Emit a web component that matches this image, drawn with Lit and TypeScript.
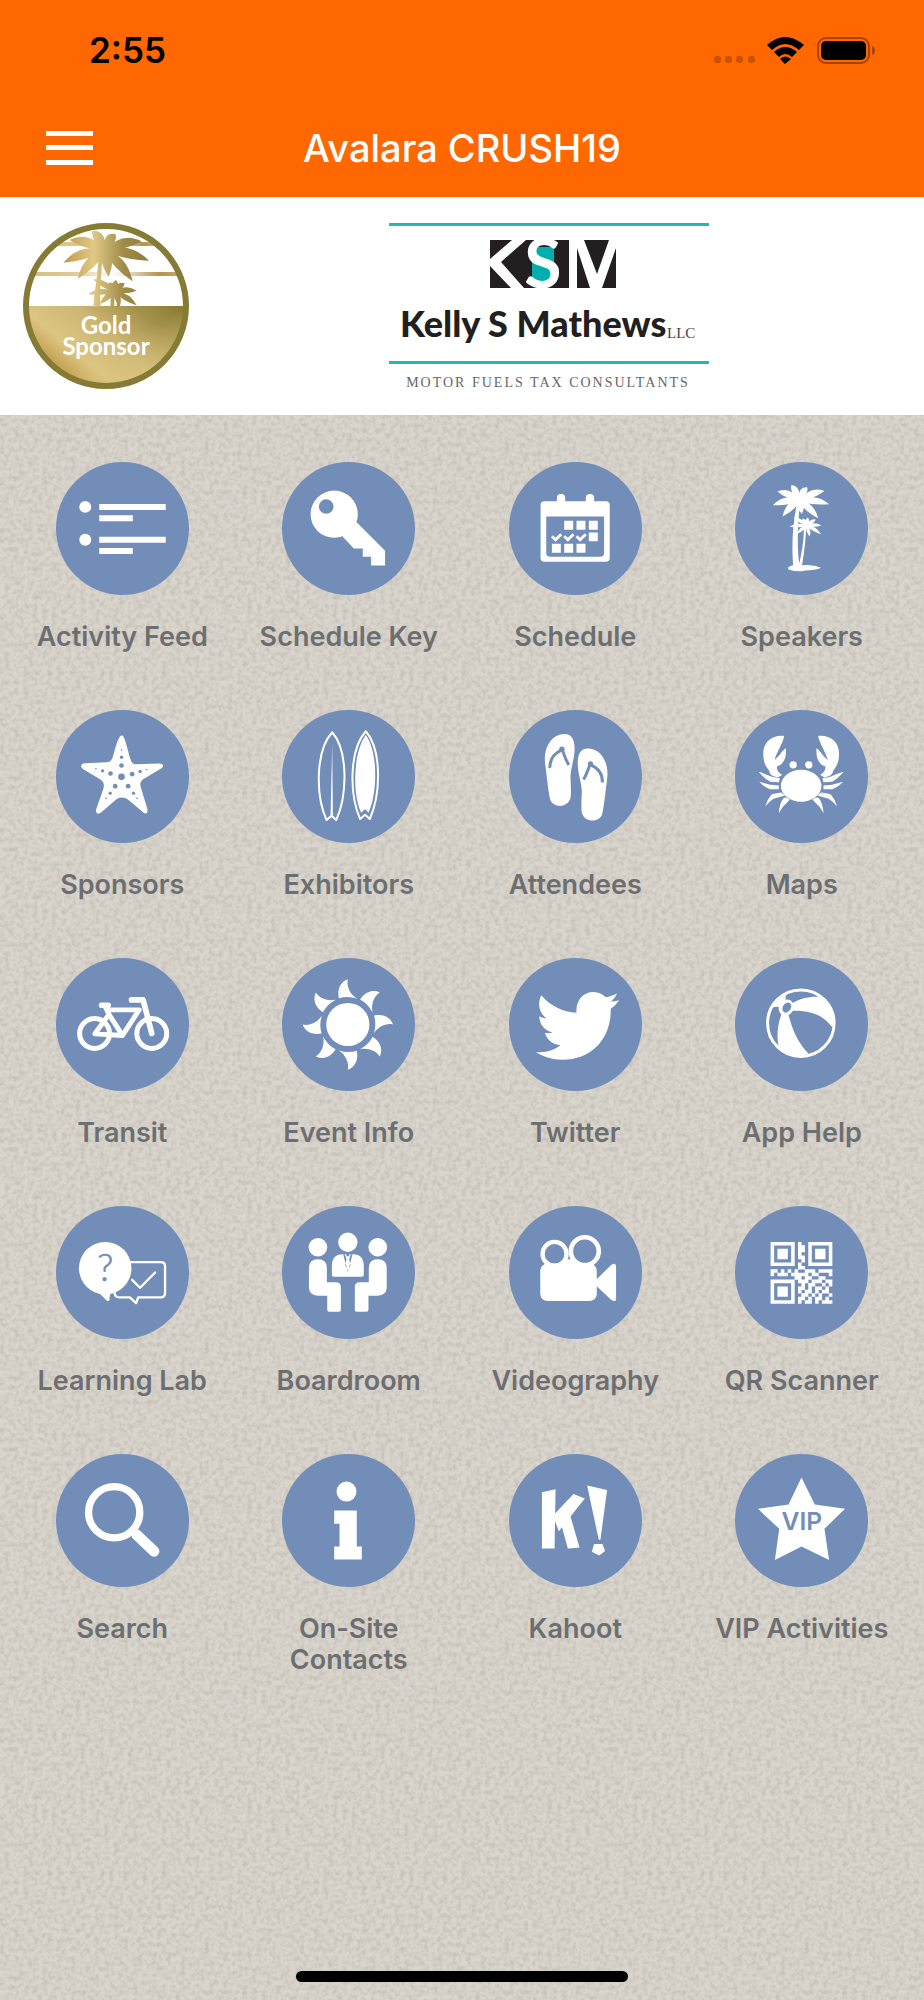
import { LitElement, html, css, svg, SVGTemplateResult } from "lit";
import { customElement, property } from "lit/decorators.js";

type Point = [number, number];

/* One palm frond: a thin leaf from the crown to its tip, arched upwards. */
const frond = ([cx, cy]: Point, [tx, ty]: Point, arch: number, width: number): string => {
  const mx = (cx + tx) / 2;
  const my = (cy + ty) / 2 - arch;
  const len = Math.hypot(tx - cx, ty - cy) || 1;
  const nx = (-(ty - cy) / len) * width;
  const ny = ((tx - cx) / len) * width;
  return `M${cx} ${cy}Q${mx + nx} ${my + ny} ${tx} ${ty}Q${mx - nx} ${my - ny} ${cx} ${cy}Z`;
};

const crown = (center: Point, tips: Point[], arch: number, width: number): string =>
  tips.map((tip) => frond(center, tip, arch, width)).join("");

const QR_ROWS = [
  "1111111.1..1111111",
  "1.....1.11.1.....1",
  "1.111.1.11.1.111.1",
  "1.111.1.1..1.111.1",
  "1.111.1.11.1.111.1",
  "1.....1..1.1.....1",
  "1111111.1..1111111",
  "........11........",
  "11.1.1.1..111.1111",
  "1.111.11111.11...1",
  ".......11.11..11..",
  "1111111.111.111.11",
  "1.....1..1.11..1.1",
  "1.111.1.11.1.11.1.",
  "1.111.1.1.11.1.11.",
  "1.111.1..11.1.1..1",
  "1.....1.11.1.11.1.",
  "1111111.1.11.1.111",
];

const qrPath = QR_ROWS.map((row, y) =>
  [...row].map((cell, x) => (cell === "1" ? `M${x} ${y}h1.04v1.04h-1.04z` : "")).join(""),
).join("");

const CLAW = svg`
  <path d="M967 141C930 138 903 158 904 198C905 224 914 236 922 246C922 257 934 264 948 266L961 258C950 251 945 246 945 233C966 226 974 208 972 178C960 185 955 200 938 213C945 188 962 165 967 141Z"/>
  <path d="M890 249Q908 254 930 264Q940 267 954 268L951 280L925 279Q908 270 890 249Z"/>
  <path d="M892 279L925 288L951 290L951 301L924 301Q906 295 892 279Z"/>
  <path d="M969 320L958 311Q936 313 928 318Q914 335 910 353Q920 340 935 330Z"/>
  <path d="M966 327Q952 343 951 374Q960 355 970 347L984 332L974 326Z"/>`;

const FLIPFLOP = svg`
  <path d="M305 132C330 132 337 155 335 185C333 215 322 240 323 265C324 290 326 315 322 328C312 355 272 355 262 330C255 300 252 260 247 225C240 175 265 132 305 132Z"/>
  <path class="cut-line" stroke-width="9" d="M261 234C260 206 275 190 297 180M297 176C303 192 309 212 318 225"/>
  <circle class="cut" cx="297" cy="178" r="8"/>`;

const SITTER = svg`
  <circle cx="108" cy="124" r="28"/>
  <path d="M81 186Q81 160 108 160Q135 160 135 186V229H162Q177 229 177 244V312Q177 318 171 318H142Q136 318 136 312V270H108Q81 268 81 244Z"/>`;

const ICONS: Record<string, SVGTemplateResult> = {
  feed: svg`<g transform="translate(-168 -69)">
    <circle cx="256" cy="204" r="18"/><circle cx="256" cy="303" r="18"/>
    <path d="M298 195h200v18H298zM298 229h101v18H298zM298 294h200v18H298zM298 328h101v18H298z"/></g>`,
  key: svg`<g transform="translate(-846 -69)">
    <circle cx="1003" cy="226" r="71"/>
    <path d="M1069 249L1156 336V380H1114V354H1089V329H1062L1028 293Z"/>
    <circle class="cut" cx="979" cy="203" r="22"/></g>`,
  calendar: svg`<g transform="translate(-140 -69)">
    <rect x="284" y="165" width="25" height="40" rx="12"/><rect x="371" y="165" width="25" height="40" rx="12"/>
    <path fill-rule="evenodd" d="M247 187H431Q443 187 443 199V357Q443 369 431 369H247Q235 369 235 357V199Q235 187 247 187ZM252 233V342Q252 354 264 354H414Q426 354 426 342V233Z"/>
    <path d="M306 246h27v27h-27zM343 246h27v27h-27zM380 246h27v27h-27zM380 281h27v26h-27zM269 315h27v27h-27zM306 315h27v27h-27zM343 315h27v27h-27z"/>
    <path d="M266 295L272 289L280 297L294 283L300 289L280 309ZM303 295L309 289L317 297L331 283L337 289L317 309ZM340 295L346 289L354 297L368 283L374 289L354 309Z"/></g>`,
  palms: svg`<g transform="translate(-819 -66)">
    <path d="${crown([1012, 184], [[989, 135], [1036, 142], [1088, 153], [1102, 193], [1069, 235], [1020, 222], [962, 230], [933, 196], [947, 155]], 12, 21)}"/>
    <circle cx="1012" cy="182" r="17"/>
    <path d="${crown([1035, 258], [[1022, 236], [1038, 233], [1062, 239], [1079, 257], [1078, 283], [1044, 290], [1006, 282], [983, 260], [995, 232]], 4, 11)}"/>
    <circle cx="1034" cy="258" r="10"/>
    <path d="M1004 195C994 250 988 310 994 380H1013C1005 320 1007 260 1014 195ZM1026 262C1027 300 1020 340 1010 380H1020C1027 340 1032 300 1033 262Z"/>
    <path d="M978 384Q990 372 1012 378Q1050 372 1078 384Q1060 392 1030 392Q1010 398 985 391Q978 389 978 384Z"/></g>`,
  starfish: svg`<g transform="translate(-168 -60)">
    <path d="M366 137C373 137 378 160 385 184C392 210 395 222 406 223L478 221C492 221 494 230 484 236L430 268C420 276 420 284 424 296L442 355C446 371 439 376 429 367L385 330C374 321 358 321 348 330L305 367C293 377 286 370 289 358L310 298C314 285 312 278 303 270L250 238C238 230 244 220 257 220L320 217C335 216 336 210 342 190C350 160 358 137 366 137Z"/>
    <g class="cut"><circle cx="365" cy="261" r="10"/><circle cx="365" cy="227" r="7"/><circle cx="365" cy="202" r="5"/><circle cx="365" cy="181" r="2.500"/>
    <circle cx="332" cy="251" r="7"/><circle cx="308" cy="243" r="5"/><circle cx="288" cy="237" r="2.500"/>
    <circle cx="397" cy="253" r="7"/><circle cx="421" cy="245" r="5"/><circle cx="441" cy="239" r="2.500"/>
    <circle cx="346" cy="289" r="7"/><circle cx="331" cy="310" r="5"/><circle cx="319" cy="326" r="2.500"/>
    <circle cx="385" cy="289" r="7"/><circle cx="401" cy="310" r="5"/><circle cx="412" cy="326" r="2.500"/></g></g>`,
  surfboards: svg`<g transform="translate(-847 -62)">
    <path class="line" stroke-width="6" d="M998 129C1046 184 1044 318 1010 393L996 380L981 393C947 318 948 184 998 129Z"/>
    <path d="M998 165L1000 380H993Z"/>
    <path class="line" stroke-width="6" d="M1099 126C1147 181 1145 313 1111 390L1097 377L1082 390C1048 313 1050 181 1099 126Z"/>
    <path d="M1099 137C1136 187 1135 310 1107 371L1097 360L1085 371C1057 310 1062 187 1099 137Z"/></g>`,
  flipflops: svg`<g transform="translate(-138 -60)">${FLIPFLOP}<g transform="translate(680 44) scale(-1 1)">${FLIPFLOP}</g></g>`,
  crab: svg`<g transform="translate(-819 -63)">
    <ellipse cx="1018" cy="291" rx="61" ry="48"/><circle cx="994" cy="228" r="11"/><circle cx="1041" cy="228" r="11"/>
    ${CLAW}<g transform="translate(2036 0) scale(-1 1)">${CLAW}</g></g>`,
  bike: svg`<g transform="translate(-168 -51)" class="line">
    <circle cx="284" cy="278" r="45" stroke-width="15"/><circle cx="456" cy="278" r="45" stroke-width="15"/>
    <path stroke-width="17" d="M305 193H325M395 177H430L456 278"/>
    <path stroke-width="15" d="M316 197L328 222L368 284L418 207H326M368 284L285 279L322 228"/></g>`,
  sun: svg`<g transform="translate(-847 -53)"><circle cx="1045" cy="253" r="65"/>
    ${[0, 45, 90, 135, 180, 225, 270, 315].map(
      (angle) => svg`<path transform="rotate(${angle} 1045 253)" d="M1018 174C1012 144 1025 124 1045 117C1040 138 1052 162 1072 175Q1045 166 1018 174Z"/>`,
    )}</g>`,
  bird: svg`<g transform="translate(-138 -51)">
    <path d="M235 163C262 195 300 214 341 216C338 180 360 153 392 153C408 153 420 160 429 169C440 168 453 163 463 158C459 168 452 175 445 182C453 182 461 180 469 177C463 188 453 197 444 204C446 290 390 357 298 357C270 357 240 349 219 334C245 337 272 330 293 313C270 312 252 298 246 276C254 278 262 277 269 275C244 268 229 250 229 226C236 230 244 232 251 233C228 215 223 188 235 163Z"/></g>`,
  ball: svg`<g transform="translate(-816 -54)">
    <circle class="line" cx="1014" cy="250" r="100" stroke-width="9"/>
    <path d="M985 192C1010 176 1040 169 1070 171C1096 186 1117 215 1117 255L1106 260C1085 230 1050 211 985 213Z"/>
    <path d="M957 220H976C985 260 1003 308 1037 341C1015 351 970 350 947 320C941 290 944 250 957 220Z"/>
    <path d="M928 203Q945 178 970 162L967 182L948 201Q938 199 928 203Z"/>
    <ellipse cx="970" cy="203" rx="22" ry="25" transform="rotate(30 970 203)"/>
    <ellipse class="cut" cx="972" cy="203" rx="12" ry="16" transform="rotate(35 972 203)"/></g>`,
  learning: svg`
    <path class="line" stroke-width="7" d="M222 169H315Q328 169 328 182V262Q328 275 315 275H247L241 292L222 275H192Q178 275 176 262"/>
    <path class="line" stroke-width="7" d="M229 222L253 246L298 200"/>
    <circle cx="148" cy="187" r="79"/>
    <path d="M120 252L152 284Q162 290 161 277L166 250Z"/>
    <text class="question" x="148" y="227">?</text>`,
  boardroom: svg`${SITTER}<g transform="translate(396 0) scale(-1 1)">${SITTER}</g>
    <circle cx="198" cy="109" r="29"/>
    <path d="M150 180Q150 146 182 145H214Q246 146 246 180V207Q246 213 240 213H156Q150 213 150 207Z"/>
    <path class="cut" d="M184 145L198 199L212 145L207 145L202 160L206 178L198 194L190 178L194 160L189 145Z"/>
    <path class="cut" d="M192 143H204L201 151H195Z"/>`,
  video: svg`
    <rect x="94" y="173" width="170" height="113" rx="22"/>
    <path d="M262 222L308 177Q322 168 322 182V278Q322 291 308 283L262 240Z"/>
    <circle class="line" cx="137" cy="144" r="36" stroke-width="13"/>
    <circle class="line" cx="228" cy="136" r="42" stroke-width="14"/>
    <path d="M165 160L190 160L200 178H155Z"/>`,
  qr: svg`<path transform="translate(107 108) scale(10.300)" d="${qrPath}"/>`,
  search: svg`<circle class="line" cx="175" cy="175" r="77" stroke-width="22"/>
    <path class="line" stroke-width="32" d="M243 243L295 293"/>`,
  info: svg`<circle cx="194" cy="113" r="30"/><path d="M157 170H225V278H240V317H157V278H173V210H157Z"/>`,
  kahoot: svg`
    <path d="M99 115L140 106L137 284H99Z"/><path d="M194 120L228 134L150 232L132 186Z"/><path d="M182 178L212 281L177 284L155 204Z"/>
    <path d="M235 95L295 108L275 258H270Z"/><path d="M256 271H281L289 292L271 305L249 294Z"/>`,
  vip: svg`<path d="M200 71L240 152L331 165L269 225L283 319L200 278L120 319L133 225L69 165L161 152Z"/>
    <text class="vip" x="201" y="229">VIP</text>`,
};

const TILES: { icon: string; label: string }[] = [
  { icon: "feed", label: "Activity Feed" },
  { icon: "key", label: "Schedule Key" },
  { icon: "calendar", label: "Schedule" },
  { icon: "palms", label: "Speakers" },
  { icon: "starfish", label: "Sponsors" },
  { icon: "surfboards", label: "Exhibitors" },
  { icon: "flipflops", label: "Attendees" },
  { icon: "crab", label: "Maps" },
  { icon: "bike", label: "Transit" },
  { icon: "sun", label: "Event Info" },
  { icon: "bird", label: "Twitter" },
  { icon: "ball", label: "App Help" },
  { icon: "learning", label: "Learning Lab" },
  { icon: "boardroom", label: "Boardroom" },
  { icon: "video", label: "Videography" },
  { icon: "qr", label: "QR Scanner" },
  { icon: "search", label: "Search" },
  { icon: "info", label: "On-Site Contacts" },
  { icon: "kahoot", label: "Kahoot" },
  { icon: "vip", label: "VIP Activities" },
];

@customElement("app-tile")
class AppTile extends LitElement {
  @property() icon = "";
  @property() label = "";

  static styles = css`
    :host { display: block; }
    .tile {
      display: flex;
      flex-direction: column;
      align-items: center;
      gap: 26px;
      text-decoration: none;
      color: #6d6e71;
    }
    .disc { display: block; width: 133px; height: 133px; border-radius: 50%; background: #728eb8; fill: #fff; }
    .cut { fill: #728eb8; }
    .line { fill: none; stroke: #fff; stroke-linecap: round; stroke-linejoin: round; }
    .cut-line { fill: none; stroke: #728eb8; }
    .label { padding: 0 16px; font-size: 27px; line-height: 31px; font-weight: 600; text-align: center; }
    .question { fill: #728eb8; stroke: #728eb8; stroke-width: 2; font: 300 112px Lato, sans-serif; text-anchor: middle; }
    .vip { fill: #728eb8; font: 600 74px Inter, sans-serif; text-anchor: middle; }
  `;

  render() {
    return html`<a class="tile" href="#${this.icon}">
      <svg class="disc" viewBox="0 0 400 400" aria-hidden="true">${ICONS[this.icon]}</svg>
      <span class="label">${this.label}</span>
    </a>`;
  }
}

@customElement("sponsor-banner")
class SponsorBanner extends LitElement {
  static styles = css`
    :host { display: block; background: #fff; }
    .banner { display: flex; align-items: center; padding: 26px 17px 25px 23px; }
    .medal { flex: none; width: 167px; height: 167px; }
    .sponsor { flex: 1; display: flex; justify-content: center; }
    .logo { width: 320px; height: 167px; overflow: visible; }
    .medal-text { fill: #fff; font: 700 24px Lato, sans-serif; text-anchor: middle; }
    .name { fill: #231f20; font: 900 36px Lato, sans-serif; }
    .suffix { fill: #444; font: 15px "Liberation Serif", serif; }
    .tagline { fill: #666; font: 14px "Liberation Serif", serif; letter-spacing: 2px; text-anchor: middle; }
    .initial { fill: #fff; font: 700 68px Lato, sans-serif; text-anchor: middle; }
  `;

  render() {
    return html`<div class="banner">
      <svg class="medal" viewBox="0 0 167 167" role="img" aria-label="Gold Sponsor">
        <defs>
          <linearGradient id="gold" x1="0" y1="0.6" x2="1" y2="0">
            <stop offset="0" stop-color="#b48a35" /><stop offset="0.25" stop-color="#dcc581" />
            <stop offset="0.5" stop-color="#cdb572" /><stop offset="0.75" stop-color="#a3914a" />
            <stop offset="1" stop-color="#857830" />
          </linearGradient>
          <linearGradient id="sheen" x1="0" y1="0" x2="1" y2="1">
            <stop offset="0.5" stop-color="#dcc581" stop-opacity="0" /><stop offset="1" stop-color="#dcc581" />
          </linearGradient>
          <linearGradient id="palm" gradientUnits="userSpaceOnUse" x1="190" y1="0" x2="447" y2="0">
            <stop offset="0" stop-color="#c09a48" /><stop offset="0.35" stop-color="#dfc985" />
            <stop offset="0.7" stop-color="#a08c4a" /><stop offset="1" stop-color="#8a7d36" />
          </linearGradient>
          <linearGradient id="ray" x1="0" y1="0" x2="1" y2="0">
            <stop offset="0" stop-color="#d9bd7c" /><stop offset="0.3" stop-color="#e0cc96" />
            <stop offset="0.55" stop-color="#fff" /><stop offset="0.85" stop-color="#b8924a" />
            <stop offset="1" stop-color="#c8a868" />
          </linearGradient>
          <clipPath id="round"><circle cx="83" cy="83" r="80" /></clipPath>
        </defs>
        <g clip-path="url(#round)">
          <rect x="30" y="19" width="105" height="4" fill="url(#ray)" />
          <rect x="8" y="49" width="150" height="4" fill="url(#ray)" />
          <rect x="0" y="83" width="167" height="84" fill="url(#gold)" />
          <rect x="0" y="83" width="167" height="84" fill="url(#sheen)" />
        </g>
        <g fill="url(#palm)" transform="translate(-23 -23) scale(0.3333)">
          <path d="${crown([315, 154], [[277, 92], [346, 102], [425, 124], [447, 182], [398, 244], [326, 230], [233, 237], [190, 188], [208, 120]], 18, 30)}" />
          <circle cx="315" cy="154" r="28" />
          <path d="M296 165C294 220 284 270 280 320H302C298 270 304 220 308 165Z" />
          <path d="${crown([345, 277], [[326, 248], [347, 240], [374, 250], [410, 272], [410, 316], [360, 318], [300, 312], [265, 282], [280, 238]], 8, 18)}" />
          <circle cx="345" cy="277" r="16" />
          <path d="M333 270h10v50h-12zM350 270h10v50h-10z" />
        </g>
        <circle cx="83" cy="83" r="80" fill="none" stroke="#857b34" stroke-width="6" />
        <text class="medal-text"><tspan x="83" y="111">Gold</tspan><tspan x="83" y="132">Sponsor</tspan></text>
      </svg>
      <div class="sponsor">
        <svg class="logo" viewBox="0 0 320 167" role="img" aria-label="KSM Kelly S Mathews LLC, Motor Fuels Tax Consultants">
          <path fill="#25b7b1" d="M0 0h320v3H0zM0 138h320v3H0z" />
          <path fill="#231f20" d="M101 17h22l-22 19zM101 43l21 22h-21zM137 17h43v48h-45l-23-26z" />
          <rect x="143" y="24" width="22" height="36" fill="#00aead" />
          <text class="initial" x="154" y="65">S</text>
          <path fill="#231f20" d="M188 25l13 40h-13zM195 17h25l-12 34zM227 25v40h-14z" />
          <text class="name" x="11" y="114">Kelly S Mathews</text>
          <text class="suffix" x="278" y="115">LLC</text>
          <text class="tagline" x="159" y="164">MOTOR FUELS TAX CONSULTANTS</text>
        </svg>
      </div>
    </div>`;
  }
}

@customElement("app-root")
class AppRoot extends LitElement {
  static styles = css`
    :host {
      display: flex;
      flex-direction: column;
      min-height: 100vh;
      font-family: Inter, "Liberation Sans", sans-serif;
      background-color: #d9d5cd;
      background-image: url("data:image/svg+xml,%3Csvg xmlns='http://www.w3.org/2000/svg' width='300' height='300'%3E%3Cfilter id='n' x='0' y='0' width='100%25' height='100%25' color-interpolation-filters='sRGB'%3E%3CfeTurbulence type='fractalNoise' baseFrequency='.21' numOctaves='2' seed='4' stitchTiles='stitch'/%3E%3CfeColorMatrix values='0 0 0 0 .78 0 0 0 0 .765 0 0 0 0 .73 0 0 0 2.4 -.9'/%3E%3C/filter%3E%3Crect width='300' height='300' filter='url(%23n)'/%3E%3C/svg%3E");
    }
    .header { background: #ff6700; }
    .status {
      display: flex;
      align-items: center;
      justify-content: space-between;
      height: 100px;
      padding: 0 48px 0 89px;
    }
    .time { font-size: 35px; line-height: 42px; font-weight: 600; color: #000; }
    .indicators { display: block; width: 163px; height: 30px; }
    .nav {
      display: grid;
      grid-template-columns: 48px 1fr 48px;
      align-items: center;
      height: 95px;
      padding: 0 45px 2px;
    }
    .menu { display: block; width: 48px; height: 48px; padding: 0; border: 0; background: none; }
    .menu-icon { display: block; width: 48px; height: 48px; }
    .title { margin: 0; font-size: 38px; line-height: 44px; font-weight: 500; color: #fff; text-align: center; }
    .grid {
      flex: 1;
      display: grid;
      grid-template-columns: repeat(4, 1fr);
      grid-auto-rows: 189px;
      row-gap: 59px;
      padding: 47px 9px;
      align-content: start;
    }
    .home { display: flex; justify-content: center; padding-bottom: 18px; }
    .home-bar { width: 36%; height: 11px; border-radius: 6px; background: #000; }
  `;

  render() {
    return html`
      <header class="header">
        <div class="status">
          <span class="time">2:55</span>
          <svg class="indicators" viewBox="0 0 163 30" aria-label="No signal, Wi-Fi, battery full">
            <g fill="#c95200">
              <rect x="1" y="21" width="7" height="7" rx="3" /><rect x="12" y="21" width="7" height="7" rx="3" />
              <rect x="23" y="21" width="7" height="7" rx="3" /><rect x="35" y="21" width="7" height="7" rx="3" />
            </g>
            <path d="M54 10Q72 -6 91 10L86 15Q72 3 59 15ZM61 17Q72 7 84 17L79 22Q72 16 66 22ZM67 24Q72 19 78 24L72 29Z" />
            <rect x="105" y="3" width="51" height="25" rx="8" fill="none" stroke="#a84400" stroke-width="2" />
            <rect x="108" y="6" width="45" height="19" rx="5" />
            <path fill="#a84400" d="M159 11q3 1 3 4.500t-3 4.500z" />
          </svg>
        </div>
        <nav class="nav">
          <button class="menu" type="button" aria-label="Menu">
            <svg class="menu-icon" viewBox="0 0 48 48"><path fill="#fff" d="M1 7h47v5H1zM1 21h47v5H1zM1 36h47v5H1z" /></svg>
          </button>
          <h1 class="title">Avalara CRUSH19</h1>
        </nav>
      </header>
      <sponsor-banner></sponsor-banner>
      <main class="grid">
        ${TILES.map((t) => html`<app-tile .icon=${t.icon} .label=${t.label}></app-tile>`)}
      </main>
      <div class="home"><div class="home-bar"></div></div>
    `;
  }
}
